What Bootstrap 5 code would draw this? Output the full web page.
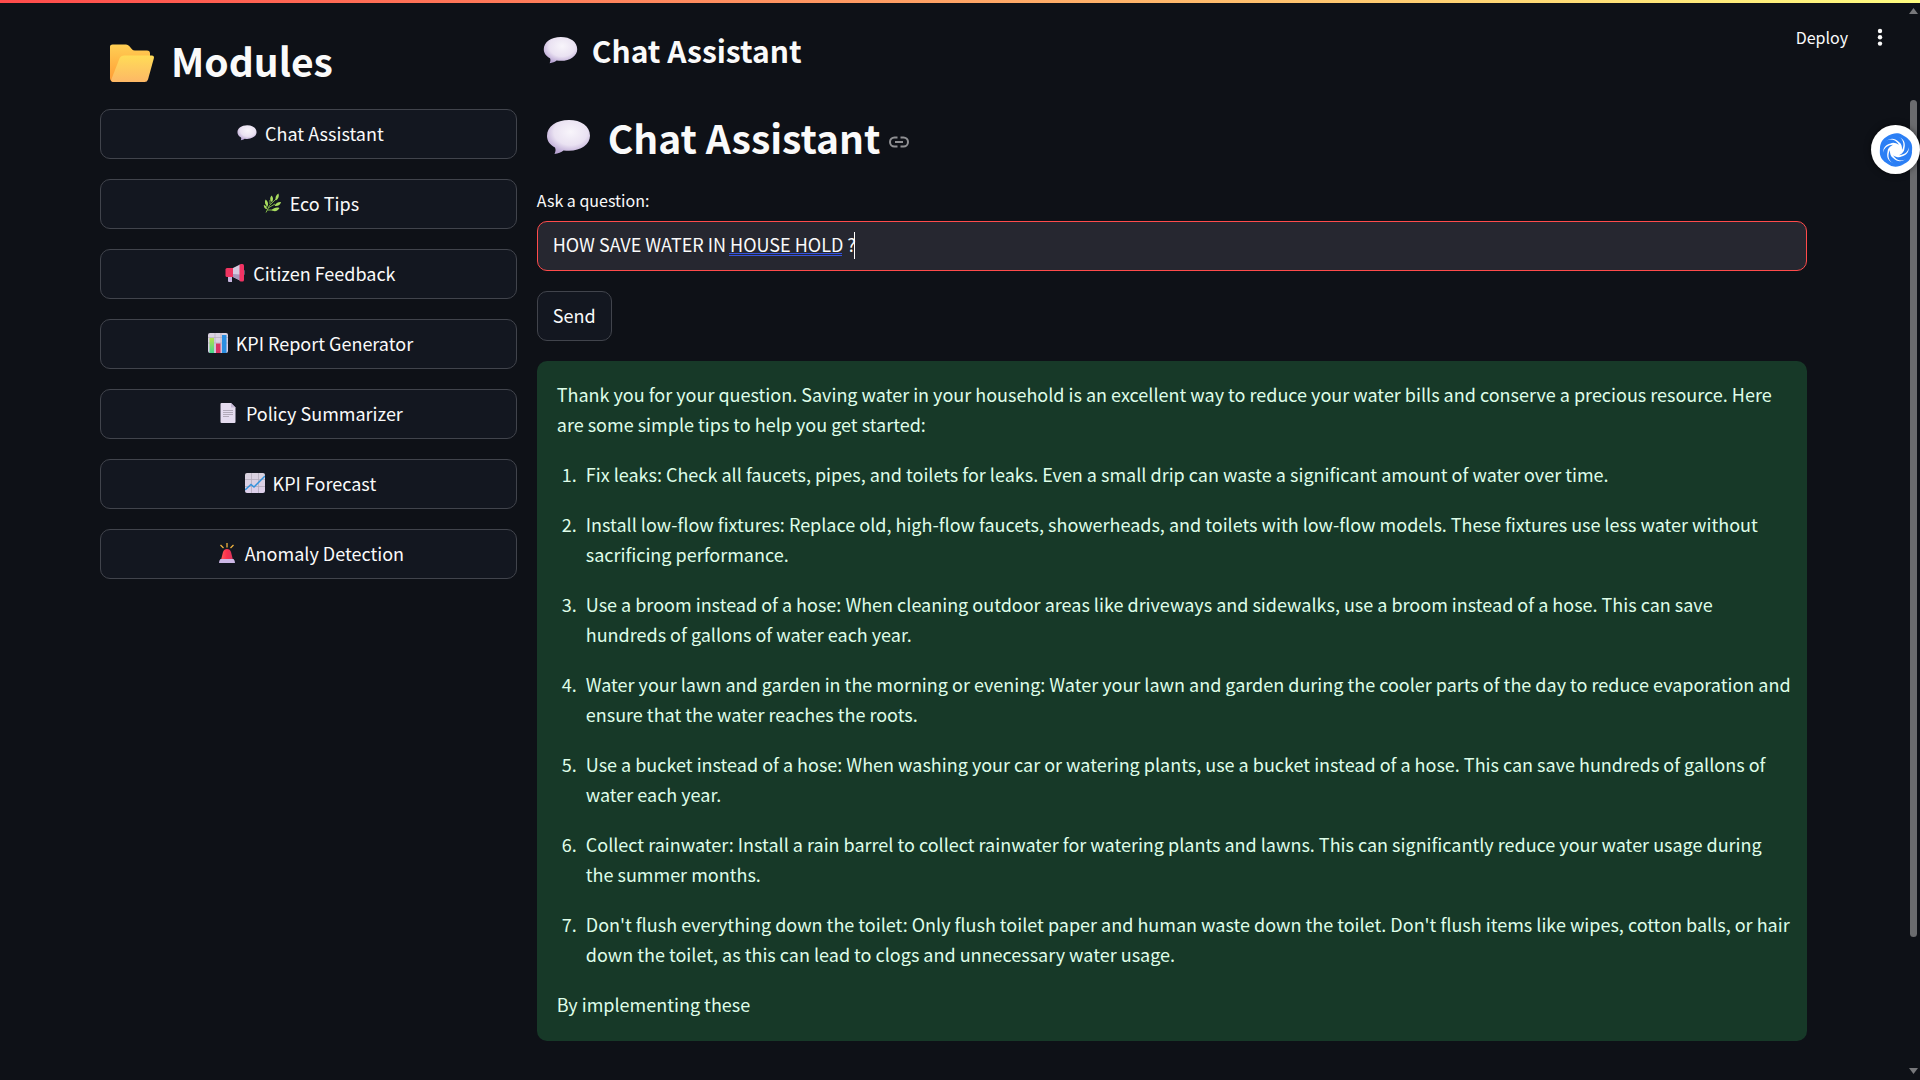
<!DOCTYPE html>
<html lang="en">
<head>
<meta charset="utf-8">
<meta name="viewport" content="width=device-width, initial-scale=1">
<title>Chat Assistant</title>
<link href="https://cdn.jsdelivr.net/npm/bootstrap@5.3.0/dist/css/bootstrap.min.css" rel="stylesheet">
<style>
  body { background: #0e1117; color: #fafafa; font-family: "Noto Sans CJK SC", "Open Sans", sans-serif; font-size: 18px; line-height: 30px; overflow-x: hidden; }
  .top-strip { height: 3px; background: linear-gradient(90deg, #ff4b4b, #fffd80); z-index: 5; }
  .page-body { padding: 29px 113px 39px 100px; gap: 20px; }
  .modules-col { flex: 1 1 calc(25% - 20px); min-width: 0; padding-top: 4px; }
  .module-list { gap: 20px; }
  .chat-col { flex: 1 1 calc(75% - 20px); min-width: 0; }
  .title-lg { font-size: 39px; line-height: 54px; font-weight: 700; margin-bottom: 24px; }
  .modules-col .title-lg { margin-bottom: 22px; }
  .title-md { font-size: 30px; line-height: 42px; font-weight: 700; margin-bottom: 39px; }
  .title-lg .emo { width: 45px; height: 45px; margin: 0 9px; }
  .title-md .emo { width: 35px; height: 35px; margin: 0 6px; }
  .emo { width: 20px; height: 20px; margin: 0 4px; flex: none; }
  .app-btn { height: 50px; padding: 0 15px 3px; border: 1px solid #41444c; border-radius: 10px; background: #131720; color: #fafafa; font-size: 18px; line-height: 30px; }
  .app-btn:hover { border-color: #ff4b4b; color: #ff4b4b; background: #131720; }
  .send-btn { margin: 20px 0; }
  .field-label { font-size: 16px; line-height: 24px; margin-bottom: 9px; }
  .ask-input, .ask-input:focus { height: 50px; padding: 0 15px 4px; border: 1px solid #ff4b4b; border-radius: 10px; background: #262730; color: #fafafa; font-size: 18px; box-shadow: none; }
  .spell-line { left: 192px; top: 32px; width: 113px; height: 3px; border: solid #3654e0; border-width: 1px 0; }
  .caret-line { left: 317px; top: 11px; width: 1px; height: 27px; background: #fff; }
  .answer { background: #173928; color: #dffde9; border-radius: 10px; padding: 18px 16px 22px 20px; }
  .answer p, .answer ol { margin-bottom: 20px; }
  .answer ol { padding-left: 24px; }
  .answer li { margin-bottom: 20px; padding-left: 5px; }
  .tool-bar { top: 22px; right: 28px; gap: 20px; }
  .deploy { font-size: 16px; line-height: 30px; color: #fafafa; background: none; border: 0; padding: 0; }
  .dots { width: 24px; height: 24px; border: 0; background: none; padding: 0; color: #fafafa; }
  .heading-link { margin: 10px 0 0 7px; }
  .helper { top: 125px; right: 0; width: 49px; height: 49px; border: 0; background: #fff; z-index: 4; padding: 0; box-shadow: 0 0 6px #0008; }
  .scroll-rail { top: 0; right: 3px; bottom: 0; width: 7px; z-index: 3; padding: 8px 0 6px; }
  .rail-thumb { margin-top: 86px; height: 77.5vh; background: #6b6c6f; border-radius: 4px; }
  .rail-arrow { width: 9px; height: 6px; margin: 0 -1px; fill: #77787b; }
</style>
</head>
<body>
<svg width="0" height="0" class="position-absolute" aria-hidden="true">
  <defs>
    <radialGradient id="gb" cx=".55" cy=".35" r=".65"><stop offset="0" stop-color="#f8f5fb"/><stop offset=".6" stop-color="#eae2f2"/><stop offset="1" stop-color="#b9a5d3"/></radialGradient>
    <linearGradient id="gf1" x2="0" y2="1"><stop offset="0" stop-color="#ffcf54"/><stop offset="1" stop-color="#ff9b35"/></linearGradient>
    <linearGradient id="gf2" x2="0" y2="1"><stop offset="0" stop-color="#ffdc57"/><stop offset="1" stop-color="#fdb866"/></linearGradient>
    <linearGradient id="gp" x2="0" y2="1"><stop offset="0" stop-color="#d9d2de"/><stop offset="1" stop-color="#ded0ec"/></linearGradient>
    <linearGradient id="gr" x2="1"><stop offset="0" stop-color="#ff5a5a"/><stop offset=".5" stop-color="#fb2f4d"/><stop offset="1" stop-color="#d3365f"/></linearGradient>
    <linearGradient id="gg" x2="0" y2="1"><stop offset="0" stop-color="#b5e04a"/><stop offset="1" stop-color="#44d68e"/></linearGradient>
  </defs>
  <symbol id="e-chat" viewBox="0 0 45 45"><path fill="url(#gb)" d="M23 5C10 5 1 11.500 1 21c0 5 3 9 8 11.500 1 2.500.500 4-.500 6.500 3.500-.500 7-2 9-3.600 2 .300 3.500.400 5.500.400 12 0 21-6.500 21-15C44 11 35 5 23 5z"/></symbol>
  <symbol id="e-folder" viewBox="0 -3 45 45"><path fill="url(#gf1)" d="M1 5.500Q1 3.500 3.500 3.500H17q2 0 3.200 1.500l3 3.500Q24 9.500 26 9.500H38q3 0 3 3V30L5 41H4q-3-1-3-4z"/><path fill="url(#gf2)" d="M15.500 14.500H43q2.500 0 1.800 3L39 38.500q-.800 2.500-3.500 2.500H4.500q-3 0-2-3l8-20.500q1.200-3 5-3z"/></symbol>
  <symbol id="e-eco" viewBox="0 0 20 20"><path d="M4 19.500Q6 12 14 6M6 15l7-4M5 17h7M8 11V7M5 14l-1-4" stroke="#7fb347" fill="none" stroke-width="1"/><g fill="#a9dc5f"><path d="M16.500.5c1 3-.2 5.500-2.700 7-1-2.800.2-5.500 2.700-7zM9.500 2.500c2 2 2 4.500.4 6.800C7.800 7.300 7.600 4.800 9.500 2.500zM3.500 6.500c2.300 1.500 3.200 4 2.200 6.800C3 12 2.300 9.200 3.500 6.500zM1.800 12c2 .5 3.200 2 3.200 4.300C3 16 1.700 14.300 1.800 12zM19 9c-.6 3-3 4.500-6.400 4C13.700 10.300 16 8.800 19 9zM17.500 15c-1.500 3-4.500 4-8 2.300 2.300-2.600 5.300-3.400 8-2.300z"/></g></symbol>
  <symbol id="e-mega" viewBox="0 0 20 20"><path fill="#c7b6df" d="M3 12h4v7H4q-1 0-1-1z"/><path fill="#ef3460" d="M2 5h6v9H2Q.5 14 .5 12.500v-6Q.5 5 2 5z"/><path fill="#d6cbe0" d="M8 5l7-3.500v16L8 14z"/><path fill="#a99abd" d="M8 14l7 3.500v-6L8 11z"/><rect x="18" y="7" width="2" height="5" rx="1" fill="#5c5367"/><rect x="14.500" y="1" width="4.500" height="17.500" rx="1.500" fill="#f03363"/></symbol>
  <symbol id="e-bars" viewBox="0 0 20 20"><rect width="20" height="20" rx="2" fill="url(#gp)"/><path d="M0 4.500h20M0 10h20M7 0v20M13 0v20" stroke="#b4acbc" stroke-width=".7"/><rect x="1.500" y="5" width="4.500" height="15" fill="url(#gg)"/><rect x="8" y="10.500" width="4.500" height="9.500" fill="#d93264"/><rect x="14" y="2" width="4.500" height="18" fill="#2b8ee0"/></symbol>
  <symbol id="e-page" viewBox="0 0 20 20"><path fill="#e5dcef" d="M3.500 0h9.500l4.500 4.500V19q0 1-1 1h-13q-1 0-1-1V1q0-1 1-1z"/><path fill="#c5b8d5" d="M13 0v4.500h4.500z"/><path d="M5 7.500h10M5 9.500h10M5 11.500h10M5 13.500h6" stroke="#aba4b2" stroke-width=".9"/></symbol>
  <symbol id="e-line" viewBox="0 0 20 20"><rect width="20" height="20" rx="2" fill="url(#gp)"/><path d="M0 6.500h20M0 13.500h20M6.500 0v20M13.500 0v20" stroke="#b4acbc" stroke-width=".8"/><path d="M0 17l6-5.500 3 2.500L20 3" fill="none" stroke="#3292dc" stroke-width="1.500"/></symbol>
  <symbol id="e-siren" viewBox="0 0 20 20"><path d="M10 0v4.500M3.500 2l3 3M16.500 2l-3 3" stroke="#eeb23f" stroke-width="1.300"/><path fill="url(#gr)" d="M4 17l2-8q1-3 4-3t4 3l2 8z"/><path fill="#cdb8e6" d="M3.500 16h13q1.500 1.500 1.500 4H2q0-2.500 1.500-4z"/></symbol>
</svg>

<div class="top-strip fixed-top"></div>

<header class="tool-bar position-absolute d-flex align-items-center">
  <button type="button" class="deploy">Deploy</button>
  <button type="button" class="dots" aria-label="Menu"><svg width="24" height="24" viewBox="0 0 24 24" fill="currentColor" class="d-block"><circle cx="12" cy="6" r="2.200"/><circle cx="12" cy="12.300" r="2.200"/><circle cx="12" cy="18.600" r="2.200"/></svg></button>
</header>

<main class="page-body d-flex align-items-start">
  <nav class="modules-col" aria-label="Modules">
    <h1 class="title-lg d-flex align-items-center"><svg class="emo"><use href="#e-folder"/></svg><span class="ps-2">Modules</span></h1>
    <div class="d-grid module-list">
      <button type="button" class="btn app-btn d-flex align-items-center justify-content-center"><svg class="emo"><use href="#e-chat"/></svg><span class="ps-1">Chat Assistant</span></button>
      <button type="button" class="btn app-btn d-flex align-items-center justify-content-center"><svg class="emo"><use href="#e-eco"/></svg><span class="ps-1">Eco Tips</span></button>
      <button type="button" class="btn app-btn d-flex align-items-center justify-content-center"><svg class="emo"><use href="#e-mega"/></svg><span class="ps-1">Citizen Feedback</span></button>
      <button type="button" class="btn app-btn d-flex align-items-center justify-content-center"><svg class="emo"><use href="#e-bars"/></svg><span class="ps-1">KPI Report Generator</span></button>
      <button type="button" class="btn app-btn d-flex align-items-center justify-content-center"><svg class="emo"><use href="#e-page"/></svg><span class="ps-1">Policy Summarizer</span></button>
      <button type="button" class="btn app-btn d-flex align-items-center justify-content-center"><svg class="emo"><use href="#e-line"/></svg><span class="ps-1">KPI Forecast</span></button>
      <button type="button" class="btn app-btn d-flex align-items-center justify-content-center"><svg class="emo"><use href="#e-siren"/></svg><span class="ps-1">Anomaly Detection</span></button>
    </div>
  </nav>

  <section class="chat-col">
    <h3 class="title-md d-flex align-items-center"><svg class="emo"><use href="#e-chat"/></svg><span class="ps-2">Chat Assistant</span></h3>
    <h1 class="title-lg d-flex align-items-center"><svg class="emo"><use href="#e-chat"/></svg><span class="ps-2">Chat Assistant</span>
      <a href="#ask" class="heading-link d-flex" aria-label="Link to heading"><svg width="24" height="24" viewBox="0 0 24 24" fill="none" stroke="#8f9093" stroke-width="2"><path d="M10.500 7.500H7.500a4.500 4.500 0 0 0 0 9h3M13.500 7.500h3a4.500 4.500 0 0 1 0 9h-3M8 12h8"/></svg></a></h1>
    <label for="ask" class="field-label d-block">Ask a question:</label>
    <div class="position-relative">
      <input id="ask" type="text" class="form-control ask-input" value="HOW SAVE WATER IN HOUSE HOLD ?" autocomplete="off" spellcheck="false">
      <span class="spell-line position-absolute"></span><span class="caret-line position-absolute"></span>
    </div>
    <button type="button" class="btn app-btn send-btn d-block">Send</button>
    <div class="answer">
      <p>Thank you for your question. Saving water in your household is an excellent way to reduce your water bills and conserve a precious resource. Here are some simple tips to help you get started:</p>
      <ol>
        <li>Fix leaks: Check all faucets, pipes, and toilets for leaks. Even a small drip can waste a significant amount of water over time.</li>
        <li>Install low-flow fixtures: Replace old, high-flow faucets, showerheads, and toilets with low-flow models. These fixtures use less water without sacrificing performance.</li>
        <li>Use a broom instead of a hose: When cleaning outdoor areas like driveways and sidewalks, use a broom instead of a hose. This can save hundreds of gallons of water each year.</li>
        <li>Water your lawn and garden in the morning or evening: Water your lawn and garden during the cooler parts of the day to reduce evaporation and ensure that the water reaches the roots.</li>
        <li>Use a bucket instead of a hose: When washing your car or watering plants, use a bucket instead of a hose. This can save hundreds of gallons of water each year.</li>
        <li>Collect rainwater: Install a rain barrel to collect rainwater for watering plants and lawns. This can significantly reduce your water usage during the summer months.</li>
        <li>Don't flush everything down the toilet: Only flush toilet paper and human waste down the toilet. Don't flush items like wipes, cotton balls, or hair down the toilet, as this can lead to clogs and unnecessary water usage.</li>
      </ol>
      <p class="mb-0">By implementing these</p>
    </div>
  </section>
</main>

<button type="button" class="helper position-fixed rounded-circle d-flex align-items-center justify-content-center" aria-label="Assistant">
  <svg width="34" height="34" viewBox="-17 -17 34 34" fill="#2b7ff5"><defs><path id="arm" d="M-8-13.900C-3-17 2-17.500 6-15.200 12-12 14-7 12.800-2 11.500 2.500 8 5 3 5.200 6.500 3.500 8.500 1 8.400-1.500 9.500-6.500 8.500-9.500 5.500-11.500 1.500-14-3-14.500-8-13.900z"/></defs>
    <use href="#arm"/><use href="#arm" transform="rotate(60)"/><use href="#arm" transform="rotate(120)"/><use href="#arm" transform="rotate(180)"/><use href="#arm" transform="rotate(240)"/><use href="#arm" transform="rotate(300)"/></svg>
</button>

<div class="scroll-rail position-fixed d-flex flex-column" aria-hidden="true">
  <svg class="rail-arrow" viewBox="0 0 9 6"><path d="M0 6L4.500 0 9 6z"/></svg>
  <div class="rail-thumb"></div>
  <svg class="rail-arrow mt-auto" viewBox="0 0 9 6"><path d="M0 0L4.500 6 9 0z"/></svg>
</div>
<script src="https://cdn.jsdelivr.net/npm/bootstrap@5.3.0/dist/js/bootstrap.bundle.min.js"></script>
</body>
</html>
